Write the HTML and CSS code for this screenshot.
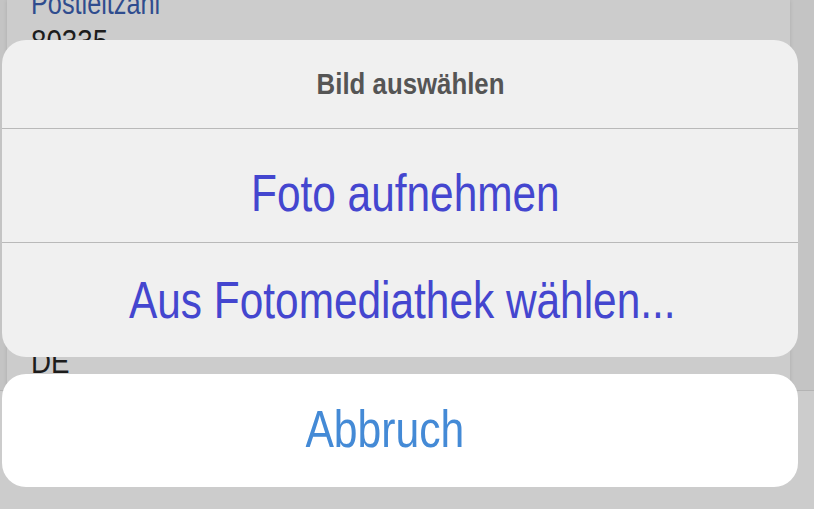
FILE: index.html
```html
<!DOCTYPE html>
<html lang="de">
<head>
<meta charset="utf-8">
<title>Bild auswählen</title>
<link rel="stylesheet" href="styles.css">
</head>
<body>
<div class="page">
  <div class="top">
    <div class="edge edge-left"></div>
    <div class="card">
      <div class="fields">
        <div class="field"><span class="label"><span class="sq">Postleitzahl</span></span><span class="value"><span class="sq">80335</span></span></div>
        <div class="field field-hidden"></div>
        <div class="field field-hidden"></div>
        <div class="field field-hidden"></div>
        <div class="field"><span class="label label-hidden"></span><span class="value"><span class="sq">DE</span></span></div>
      </div>
    </div>
    <div class="edge edge-right"></div>
  </div>
  <div class="toolbar"></div>
</div>

<div class="overlay">
  <div class="sheet">
    <div class="group">
      <div class="title"><span class="sq sq-title">Bild auswählen</span></div>
      <div class="action action-1"><span class="sq sq-a1">Foto aufnehmen</span></div>
      <div class="action action-2"><span class="sq sq-a2">Aus Fotomediathek wählen...</span></div>
    </div>
    <div class="cancel"><span class="sq sq-cancel">Abbruch</span></div>
  </div>
</div>
</body>
</html>
```

FILE: styles.css
```css
html, body {
  margin: 0;
  padding: 0;
  width: 814px;
  height: 509px;
  overflow: hidden;
  background: #cccccc;
  font-family: "Liberation Sans", Arial, sans-serif;
}

.sq {
  display: inline-block;
  white-space: nowrap;
  transform: scaleX(0.815);
  transform-origin: 0 50%;
}

/* background page */
.page {
  display: flex;
  flex-direction: column;
  height: 509px;
}

.top {
  display: flex;
  height: 390px;
}

.edge {
  background: #c4c4c4;
}

.edge-left {
  width: 7px;
}

.edge-right {
  flex: 1;
}

.card {
  width: 783px;
  background: #cccccc;
  overflow: hidden;
  box-shadow: 0 0 4px rgba(0, 0, 0, 0.12);
  position: relative;
}

.fields {
  margin-top: -13px;
  padding-left: 24px;
  display: flex;
  flex-direction: column;
}

.field {
  height: 80px;
  display: flex;
  flex-direction: column;
}

.label {
  font-size: 31px;
  line-height: 34px;
  height: 34px;
  color: #2f4c8e;
}

.value {
  font-size: 34px;
  line-height: 40px;
  color: #1c1c1c;
}

.toolbar {
  flex: 1;
  border-top: 1px solid #b4b4b4;
  background: #cccccc;
}

/* action sheet */
.overlay {
  position: fixed;
  left: 0;
  top: 0;
  width: 814px;
  height: 509px;
  box-sizing: border-box;
  padding: 40px 16px 22px 2px;
}

.sheet {
  display: flex;
  flex-direction: column;
  gap: 17px;
}

.group {
  background: #f0f0f0;
  border-radius: 24px;
  overflow: hidden;
  display: flex;
  flex-direction: column;
}

.title {
  height: 88px;
  box-sizing: border-box;
  padding-top: 30px;
  text-align: center;
  font-size: 29px;
  line-height: 29px;
  font-weight: bold;
  color: #555555;
}

.action {
  border-top: 1px solid #b9b9b9;
  box-sizing: border-box;
  text-align: center;
  font-size: 52px;
  line-height: 52px;
  color: #4446cf;
}

.action-1 {
  height: 114px;
  padding-top: 38px;
}

.action-2 {
  height: 115px;
  padding-top: 31px;
}

.cancel {
  background: #ffffff;
  border-radius: 24px;
  height: 113px;
  box-sizing: border-box;
  padding-top: 29px;
  text-align: center;
  font-size: 52px;
  line-height: 52px;
  color: #448ad6;
}

.sq-title {
  transform-origin: 50% 50%;
  transform: translateX(11px) scaleX(0.89);
}

.sq-a1 {
  transform-origin: 50% 50%;
  transform: translateX(5px) scaleX(0.815);
}

.sq-a2 {
  transform-origin: 50% 50%;
  transform: translateX(2px) scaleX(0.815);
}

.sq-cancel {
  transform-origin: 50% 50%;
  transform: translateX(-15px) scaleX(0.82);
}
```
